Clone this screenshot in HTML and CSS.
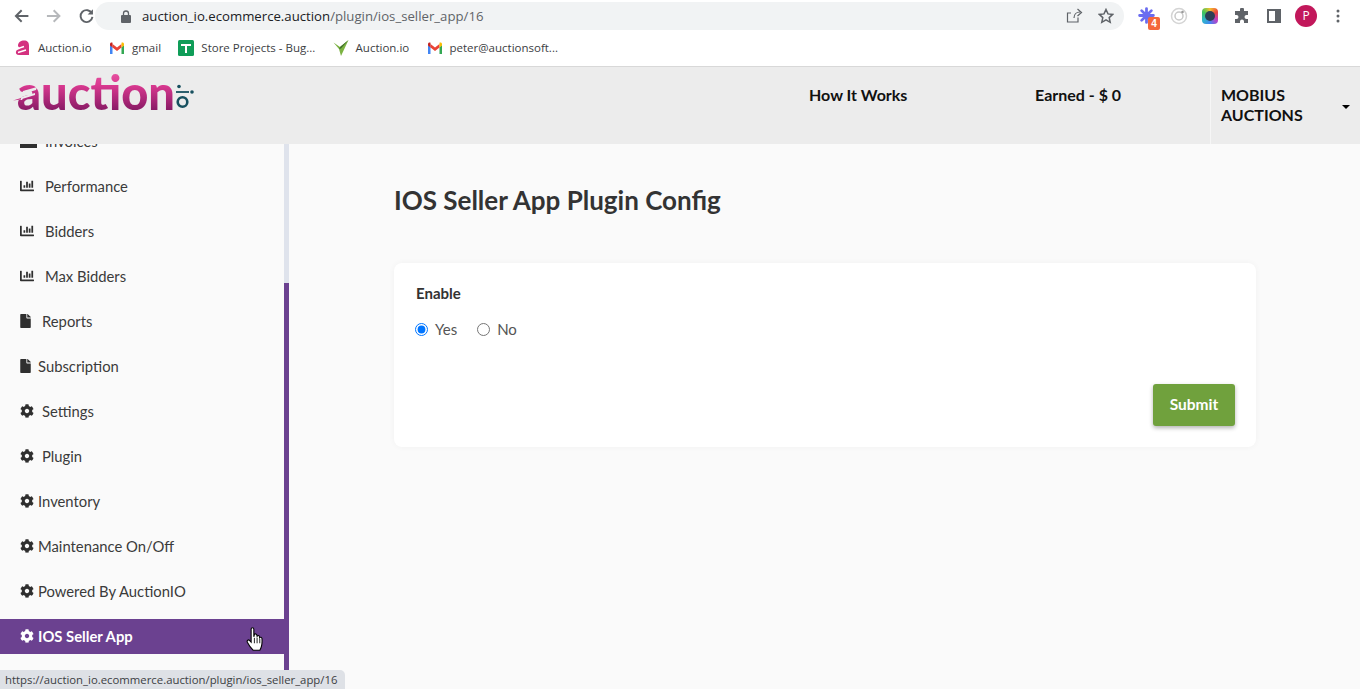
FILE: index.html
```html
<!DOCTYPE html>
<html lang="en">
<head>
    <meta charset="UTF-8">
    <meta name="viewport" content="width=device-width, initial-scale=1.0">
    <title>IOS Seller App Plugin Config</title>
    <link rel="stylesheet" href="styles.css">
</head>
<body>
    <svg class="defs" width="0" height="0">
        <symbol id="i-gear" viewBox="0 0 512 512"><path d="M487.4 315.7l-42.6-24.6c4.3-23.2 4.3-47 0-70.2l42.6-24.6c4.9-2.8 7.1-8.6 5.5-14-11.1-35.6-30-67.8-54.7-94.6-3.8-4.1-10-5.1-14.8-2.3L380.8 110c-17.9-15.4-38.5-27.3-60.8-35.1V25.8c0-5.6-3.9-10.5-9.4-11.7-36.7-8.2-74.3-7.8-109.2 0-5.5 1.2-9.4 6.1-9.4 11.7V75c-22.2 7.9-42.8 19.8-60.8 35.1L88.7 85.5c-4.9-2.8-11-1.9-14.8 2.3-24.7 26.7-43.6 58.9-54.7 94.6-1.7 5.4.6 11.2 5.5 14L67.3 221c-4.3 23.2-4.3 47 0 70.2l-42.6 24.6c-4.9 2.8-7.1 8.6-5.5 14 11.1 35.6 30 67.8 54.7 94.6 3.8 4.1 10 5.1 14.8 2.3l42.6-24.6c17.9 15.4 38.5 27.3 60.8 35.1v49.2c0 5.6 3.9 10.5 9.4 11.7 36.7 8.2 74.3 7.8 109.2 0 5.5-1.2 9.4-6.1 9.4-11.7v-49.2c22.2-7.9 42.8-19.8 60.8-35.1l42.6 24.6c4.9 2.8 11 1.9 14.8-2.3 24.7-26.7 43.6-58.9 54.7-94.6 1.5-5.5-.7-11.3-5.6-14.1zM256 336c-44.1 0-80-35.9-80-80s35.9-80 80-80 80 35.9 80 80-35.9 80-80 80z"/></symbol>
        <symbol id="i-file" viewBox="0 0 384 512"><path d="M224 136V0H24C10.7 0 0 10.7 0 24v464c0 13.3 10.7 24 24 24h336c13.3 0 24-10.7 24-24V160H248c-13.2 0-24-10.8-24-24zm160-14.1v6.1H256V0h6.1c6.4 0 12.5 2.5 17 7l97.9 98c4.5 4.5 7 10.6 7 16.9z"/></symbol>
        <symbol id="i-chart" viewBox="0 0 512 512"><path d="M332.8 320h38.4c6.4 0 12.8-6.4 12.8-12.8V172.8c0-6.4-6.4-12.8-12.8-12.8h-38.4c-6.4 0-12.8 6.4-12.8 12.8v134.4c0 6.4 6.4 12.8 12.8 12.8zm96 0h38.4c6.4 0 12.8-6.4 12.8-12.8V76.8c0-6.4-6.4-12.8-12.8-12.8h-38.4c-6.4 0-12.8 6.4-12.8 12.8v230.4c0 6.4 6.4 12.8 12.8 12.8zm-288 0h38.4c6.4 0 12.8-6.4 12.8-12.8v-70.4c0-6.4-6.4-12.8-12.8-12.8h-38.4c-6.4 0-12.8 6.4-12.8 12.8v70.4c0 6.4 6.4 12.8 12.8 12.8zm96 0h38.4c6.4 0 12.8-6.4 12.8-12.8V108.8c0-6.4-6.4-12.8-12.8-12.8h-38.4c-6.4 0-12.8 6.4-12.8 12.8v198.4c0 6.4 6.4 12.8 12.8 12.8zM496 384H64V80c0-8.84-7.16-16-16-16H16C7.16 64 0 71.16 0 80v336c0 17.67 14.33 32 32 32h464c8.84 0 16-7.16 16-16v-32c0-8.84-7.16-16-16-16z"/></symbol>
        <symbol id="i-gmail" viewBox="0 0 16 12">
            <path d="M1 12V3l2.500 2v7z" fill="#4285f4"/>
            <path d="M12.500 12V5L15 3v9z" fill="#34a853"/>
            <path d="M3.500 5.500V2L8 5.500 12.500 2v3.500L8 9z" fill="#ea4335"/>
            <path d="M1 3.500V2C1 .6 2.500 0 3.500 .8V5.500z" fill="#c5221f"/>
            <path d="M15 3.500V2C15 .6 13.500 0 12.500 .8V5.500z" fill="#fbbc04"/>
        </symbol>
    </svg>

    <div class="toolbar">
        <div class="nav-btns">
            <svg width="18" height="18" viewBox="0 0 18 18"><path d="M16 9H3.500M9 3L3 9l6 6" class="stroke-dark"/></svg>
            <svg width="18" height="18" viewBox="0 0 18 18"><path d="M2 9h12.500M9 3l6 6-6 6" class="stroke-light"/></svg>
            <svg width="18" height="18" viewBox="0 0 18 18"><path d="M14.500 6.500A6.200 6.200 0 1 0 15 10" class="stroke-dark"/><path d="M15.500 2v5.500H10z" fill="#5f6368"/></svg>
        </div>
        <div class="address">
            <svg width="10" height="13" viewBox="0 0 10 13"><path d="M1 5h8a1 1 0 0 1 1 1v6a1 1 0 0 1-1 1H1a1 1 0 0 1-1-1V6a1 1 0 0 1 1-1z" fill="#5f6368"/><path d="M2.500 5V3.500a2.500 2.500 0 0 1 5 0V5" fill="none" stroke="#5f6368" stroke-width="1.300"/></svg>
            <span class="url"><span class="url-host">auction_io.ecommerce.auction</span>/plugin/ios_seller_app/16</span>
            <div class="address-icons">
                <svg width="17" height="16" viewBox="0 0 17 16"><path d="M12 9.500V14H1.500V5H5M8 10c0-3.500 2.500-6 6-6M11.500 1L15.500 4.500 11.500 8" fill="none" stroke="#5f6368" stroke-width="1.200"/></svg>
                <svg width="16" height="16" viewBox="0 0 16 16"><path d="M8 1.500l2 4.400 4.700.5-3.500 3.200 1 4.700L8 11.900l-4.200 2.400 1-4.700L1.300 6.400 6 5.900z" fill="none" stroke="#5f6368" stroke-width="1.500"/></svg>
            </div>
        </div>
        <div class="extensions">
            <div class="ext ext-spin">
                <svg width="17" height="17" viewBox="0 0 16 16"><circle cx="8" cy="8" r="3.500" fill="#6a6cf0"/><g stroke="#6a6cf0" stroke-width="2.600" stroke-linecap="round"><path d="M8 1.500v4M8 10.500v4M1.500 8h4M10.500 8h4M3.400 3.400l3 3M9.600 9.600l3 3M3.400 12.600l3-3M9.600 6.400l3-3"/></g></svg>
                <span class="ext-badge">4</span>
            </div>
            <svg class="ext" width="18" height="18" viewBox="0 0 18 18"><circle cx="9" cy="9" r="7.500" fill="none" stroke="#d4d4d4" stroke-width="1.500"/><circle cx="9" cy="9" r="4" fill="none" stroke="#c8c8c8" stroke-width="1.500"/><circle cx="12.500" cy="5" r="1.300" fill="#999"/></svg>
            <div class="ext ext-cam"><span class="ext-cam-lens"></span></div>
            <svg class="ext" width="16" height="16" viewBox="0 0 16 16"><path d="M6 1.500a2 2 0 0 1 4 0V3h4v4h-1.500a2 2 0 0 0 0 4H14v4H10v-1.500a2 2 0 0 0-4 0V15H1v-4h1.500a2 2 0 0 0 0-4H1V3h5z" fill="#5f6368"/></svg>
            <svg class="ext ext-panel" width="14" height="14" viewBox="0 0 14 14"><path d="M0 0h14v14H0zM2 2v10h6V2z" fill="#5f6368" fill-rule="evenodd"/></svg>
            <div class="avatar">P</div>
            <svg class="ext" width="4" height="14" viewBox="0 0 4 14"><circle cx="2" cy="2" r="1.500" fill="#5f6368"/><circle cx="2" cy="7" r="1.500" fill="#5f6368"/><circle cx="2" cy="12" r="1.500" fill="#5f6368"/></svg>
        </div>
    </div>

    <div class="bookmarks">
        <a class="bookmark">
            <svg width="16" height="16" viewBox="0 0 16 16"><path d="M3 6C3 2 6 .5 9 .5c3.500 0 5 2 5 5V15H4C1.500 15 .5 13.500 1 11.500 1.400 10 3 9 5 9z" fill="#d4317f"/><path d="M0 9.500l9-3M3 12.500l8-2.500" stroke="#fff" stroke-width="1.400"/></svg>
            Auction.io
        </a>
        <a class="bookmark"><svg width="16" height="12"><use href="#i-gmail"/></svg>gmail</a>
        <a class="bookmark">
            <svg width="16" height="16" viewBox="0 0 16 16"><rect width="16" height="16" rx="1.500" fill="#0f9d58"/><path d="M3 4h10v2H9v7H7V6H3z" fill="#fff"/></svg>
            Store Projects - Bug...
        </a>
        <a class="bookmark">
            <svg width="16" height="18" viewBox="0 0 16 18"><path d="M.500 3.500L7 8 15.500 1 8 17 6 10z" fill="#7cb342"/><path d="M6 10l1-2 8.500-7L8 9.500z" fill="#3f6f2a"/></svg>
            Auction.io
        </a>
        <a class="bookmark"><svg width="16" height="12"><use href="#i-gmail"/></svg>peter@auctionsoft...</a>
    </div>

    <header class="site-header">
        <a class="logo">
            <span class="logo-text">auction</span>
            <svg class="logo-gavel" width="32" height="24" viewBox="0 0 32 24"><path d="M0 17l11-3-2 3zM10 8l14-4-1 3-13 4zM8 14l14-4v2L9 16z" fill="#ececec"/><path d="M0 17.500l8-2.500v1.500z" fill="#c62f84"/></svg>
            <svg class="logo-io" width="18" height="26" viewBox="0 0 18 26"><circle cx="3" cy="2.500" r="1.800" fill="#17505f"/><path d="M0 8h13" stroke="#17505f" stroke-width="1.800"/><circle cx="16" cy="8" r="1.800" fill="#17505f"/><circle cx="6.500" cy="18" r="4.800" fill="none" stroke="#17505f" stroke-width="2.600"/></svg>
        </a>
        <nav class="top-nav">
            <a class="top-link top-link-how">How It Works</a>
            <a class="top-link top-link-earned">Earned - $ 0</a>
            <div class="user-menu">
                <span class="user-name">MOBIUS AUCTIONS</span>
                <span class="caret"></span>
            </div>
        </nav>
    </header>

    <div class="content">
        <aside class="sidebar">
            <ul class="side-list">
                <li class="side-item">
                    <svg class="side-icon side-icon-money" width="17" height="14" viewBox="0 0 17 14"><rect width="17" height="14" fill="#2f2f2f"/></svg>
                    <span class="side-label-near">Invoices</span>
                </li>
                <li class="side-item"><svg class="side-icon"><use href="#i-chart"/></svg><span class="side-label-far">Performance</span></li>
                <li class="side-item"><svg class="side-icon"><use href="#i-chart"/></svg><span class="side-label-far">Bidders</span></li>
                <li class="side-item"><svg class="side-icon"><use href="#i-chart"/></svg><span class="side-label-far">Max Bidders</span></li>
                <li class="side-item"><svg class="side-icon side-icon-file"><use href="#i-file"/></svg><span class="side-label-file">Reports</span></li>
                <li class="side-item"><svg class="side-icon side-icon-file"><use href="#i-file"/></svg><span class="side-label-tight">Subscription</span></li>
                <li class="side-item"><svg class="side-icon"><use href="#i-gear"/></svg><span class="side-label-mid">Settings</span></li>
                <li class="side-item"><svg class="side-icon"><use href="#i-gear"/></svg><span class="side-label-mid">Plugin</span></li>
                <li class="side-item"><svg class="side-icon"><use href="#i-gear"/></svg><span>Inventory</span></li>
                <li class="side-item"><svg class="side-icon"><use href="#i-gear"/></svg><span>Maintenance On/Off</span></li>
                <li class="side-item"><svg class="side-icon"><use href="#i-gear"/></svg><span>Powered By AuctionIO</span></li>
                <li class="side-item active"><svg class="side-icon"><use href="#i-gear"/></svg><span>IOS Seller App</span></li>
            </ul>
            <div class="side-scroll"><div class="side-thumb"></div></div>
        </aside>

        <main class="main">
            <h1 class="page-title">IOS Seller App Plugin Config</h1>
            <form class="card">
                <div class="field-label">Enable</div>
                <div class="radios">
                    <label class="radio"><input type="radio" name="enable" checked>Yes</label>
                    <label class="radio"><input type="radio" name="enable">No</label>
                </div>
                <div class="card-actions">
                    <button type="button" class="submit-btn">Submit</button>
                </div>
            </form>
        </main>
    </div>

    <svg class="hand-cursor" width="20" height="26" viewBox="0 0 18 24"><path d="M4.500 2c0-1.800 2.500-1.800 2.500 0v7l.5-2c.5-1 2.200-.8 2.300.5l.2 1c.4-1 2-.9 2.200.4l.2 1c.5-.8 2-.5 2.100.8.200 2.500.2 5-.5 7.300-.4 1.500-1 2.500-1.500 3.500H6.500C5 20 2.500 17 1 14c-.7-1.500 1-2.800 2.200-1.500l1.300 1.500z" fill="#fff" stroke="#000" stroke-width="1"/><path d="M7.500 10v5M10 10v5M12.500 11v4" stroke="#000" stroke-width=".8"/></svg>

    <div class="status-bubble">https://auction_io.ecommerce.auction/plugin/ios_seller_app/16</div>
</body>
</html>
```
FILE: styles.css
```css
* {
    box-sizing: border-box;
}
html, body {
    height: 100%;
}
body {
    margin: 0;
    height: 689px;
    overflow: hidden;
    position: relative;
    display: flex;
    flex-direction: column;
    font-family: "Lato", "Noto Sans", sans-serif;
    color: #333;
    background-color: #fafafa;
}
.defs {
    position: absolute;
}

/* browser bar */
.toolbar {
    height: 32px;
    flex-shrink: 0;
    display: flex;
    align-items: center;
    background-color: #fff;
}
.nav-btns {
    width: 95px;
    padding-left: 13px;
    display: flex;
    gap: 15px;
}
.stroke-dark {
    fill: none;
    stroke: #5f6368;
    stroke-width: 2;
}
.stroke-light {
    fill: none;
    stroke: #b6b8bb;
    stroke-width: 2;
}
.address {
    width: 1029px;
    height: 28px;
    padding: 0 10px 0 26px;
    display: flex;
    align-items: center;
    gap: 11px;
    border-radius: 14px;
    background-color: #f1f3f4;
}
.url {
    font-family: "Open Sans", sans-serif;
    font-size: 13.2px;
    color: #5f6368;
}
.url-host {
    color: #202124;
}
.address-icons {
    margin-left: auto;
    display: flex;
    align-items: center;
    gap: 15px;
}
.extensions {
    flex: 1;
    display: flex;
    align-items: center;
    padding-left: 14px;
}
.ext-spin {
    position: relative;
    width: 17px;
    height: 18px;
    margin-right: 15px;
}
.ext-badge {
    position: absolute;
    left: 10px;
    top: 10px;
    width: 12px;
    height: 13px;
    border-radius: 2px;
    background-color: #f4683c;
    color: #fff;
    font: bold 10px/13px "Liberation Sans", sans-serif;
    text-align: center;
}
svg.ext {
    flex-shrink: 0;
}
.ext-cam {
    width: 16px;
    height: 16px;
    margin: 0 16px 0 14px;
    padding: 3px;
    border-radius: 4px;
    background: conic-gradient(#f5c12e, #e8453c, #c03fc4, #4285f4, #2fb7c9, #3fc45a, #f5c12e);
}
.ext-cam-lens {
    display: block;
    width: 10px;
    height: 10px;
    border-radius: 50%;
    background-color: #2d3f55;
}
svg.ext-panel {
    margin-left: 17px;
}
.avatar {
    width: 22px;
    height: 22px;
    margin: 0 19px 0 14px;
    border-radius: 50%;
    background-color: #c2185b;
    color: #fff;
    font: 12px/22px "Open Sans", sans-serif;
    text-align: center;
}

.bookmarks {
    height: 35px;
    flex-shrink: 0;
    padding: 0 0 3px 15px;
    display: flex;
    align-items: center;
    gap: 17.3px;
    background-color: #fff;
    border-bottom: 1px solid #d8d8d8;
}
.bookmark {
    display: flex;
    align-items: center;
    gap: 7px;
    font-family: "Open Sans", sans-serif;
    font-size: 11.5px;
    color: #3c4043;
}

/* site header */
.site-header {
    height: 77px;
    flex-shrink: 0;
    display: flex;
    justify-content: space-between;
    background-color: #ececec;
    color: #111;
}
.logo {
    position: relative;
    display: flex;
    padding-left: 17px;
}
.logo-text {
    height: 48px;
    margin-top: 2px;
    font-size: 47px;
    font-weight: 900;
    line-height: 46px;
    background: linear-gradient(#ec5aa6 0%, #d8388f 35%, #8a1b66 85%);
    -webkit-background-clip: text;
    background-clip: text;
    color: transparent;
}
.logo-gavel {
    position: absolute;
    left: 13px;
    top: 16px;
}
.logo-io {
    margin: 17px 0 0 1px;
}
.top-nav {
    display: flex;
}
.top-link {
    padding-top: 18px;
    font-size: 16px;
    font-weight: 700;
    line-height: 20px;
}
.top-link-how {
    width: 226px;
}
.top-link-earned {
    width: 175px;
}
.user-menu {
    width: 150px;
    padding: 18px 10px 0 10px;
    display: flex;
    justify-content: space-between;
    border-left: 1px solid #f6f6f6;
}
.user-name {
    width: 110px;
    font-size: 16px;
    font-weight: 700;
    line-height: 20px;
}
.caret {
    width: 0;
    height: 0;
    margin-top: 20px;
    border-left: 4px solid transparent;
    border-right: 4px solid transparent;
    border-top: 4px solid #000;
}

/* page */
.content {
    flex: 1;
    min-height: 0;
    display: flex;
}
.sidebar {
    width: 289px;
    flex-shrink: 0;
    position: relative;
    overflow: hidden;
}
.side-list {
    list-style: none;
    margin: -20px 5px 0 0;
    padding: 0;
    display: flex;
    flex-direction: column;
    gap: 10px;
}
.side-item {
    height: 35px;
    padding: 0 0 2px 20px;
    display: flex;
    align-items: center;
    gap: 4px;
    font-size: 14.8px;
    color: #3b3b3b;
}
.side-icon {
    width: 14px;
    height: 14px;
    flex-shrink: 0;
    fill: #2f2f2f;
}
.side-icon-file {
    width: 11px;
}
.side-icon-money {
    width: 17px;
}
.side-label-near {
    margin-left: 4px;
}
.side-label-far {
    margin-left: 7px;
}
.side-label-mid {
    margin-left: 4px;
}
.side-label-file {
    margin-left: 7px;
}
.side-label-tight {
    margin-left: 3px;
}
.side-item.active {
    background-color: #6b4190;
    color: #fff;
    font-weight: 700;
}
.side-item.active .side-icon {
    fill: #fff;
}
.side-scroll {
    position: absolute;
    right: 0;
    top: 0;
    bottom: 0;
    width: 5px;
    background-color: #dfe3ec;
}
.side-thumb {
    margin-top: 139px;
    height: 420px;
    background-color: #6b4190;
}
.main {
    flex: 1;
    padding: 41px 104px 0 105px;
}
.page-title {
    margin: 0;
    font-size: 26px;
    font-weight: 700;
    line-height: 30px;
    color: #333;
}
.card {
    margin-top: 48px;
    height: 184px;
    padding: 20px 21px 21px 22px;
    display: flex;
    flex-direction: column;
    border-radius: 8px;
    background-color: #fff;
    box-shadow: 0 0 6px rgba(0, 0, 0, 0.04);
}
.field-label {
    font-size: 15px;
    font-weight: 700;
    line-height: 20px;
}
.radios {
    margin: 16px 0 0 -1px;
    display: flex;
    gap: 20px;
    font-size: 15px;
    line-height: 20px;
    color: #555;
}
.radio {
    display: flex;
    align-items: center;
    gap: 7px;
}
.radio input {
    width: 13px;
    height: 13px;
    margin: 0;
}
.card-actions {
    margin-top: auto;
    display: flex;
    justify-content: flex-end;
}
.submit-btn {
    width: 82px;
    height: 42px;
    padding: 0 0 2px;
    border: none;
    border-radius: 3px;
    background-color: #70a13d;
    color: #fff;
    font-family: inherit;
    font-size: 15.5px;
    font-weight: 700;
    box-shadow: 0 2px 4px rgba(0, 0, 0, 0.3);
}

/* overlays */
.hand-cursor {
    position: absolute;
    left: 246px;
    top: 627px;
}
.status-bubble {
    position: absolute;
    left: 0;
    bottom: 0;
    width: 345px;
    height: 19px;
    padding-left: 5px;
    border-top-right-radius: 5px;
    background-color: #dee1e6;
    font-family: "Open Sans", sans-serif;
    font-size: 11.35px;
    line-height: 19px;
    color: #3c4043;
    white-space: nowrap;
}
```
